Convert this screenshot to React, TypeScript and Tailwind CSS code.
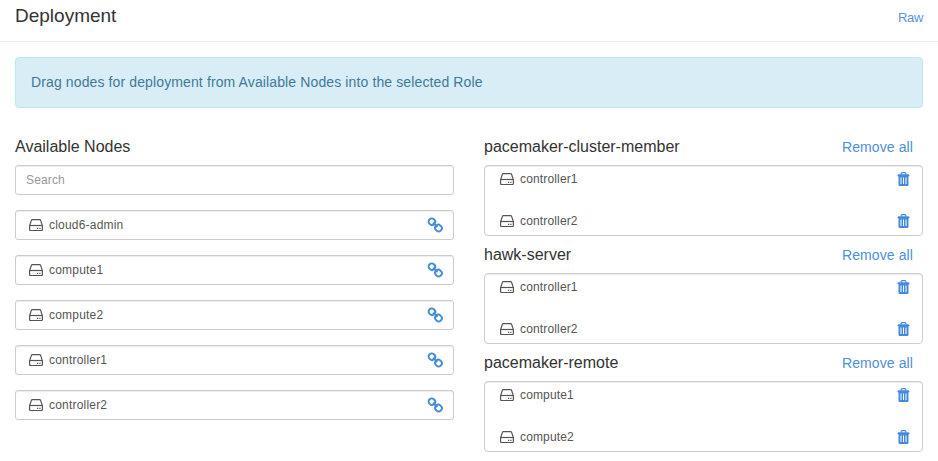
import React from "react";

const availableNodes = ["cloud6-admin", "compute1", "compute2", "controller1", "controller2"];

const roles = [
  { name: "pacemaker-cluster-member", nodes: ["controller1", "controller2"] },
  { name: "hawk-server", nodes: ["controller1", "controller2"] },
  { name: "pacemaker-remote", nodes: ["compute1", "compute2"] },
];

function DiskIcon() {
  return (
    <svg className="h-3 w-3.5 shrink-0" viewBox="0 0 14 12" fill="none" stroke="#555" strokeWidth="1.2">
      <path d="M.6 6.8 2.300 1.600Q2.600.6 3.500.6h7q.9 0 1.200 1l1.700 5.200v3.700q0 1-1 1H1.600Q.6 11.500.6 10.500Z" />
      <path d="M.8 6.500h12.400" />
      <path d="M8 9.400h1.200M10.300 9.400h1.200" strokeWidth="1.200" />
    </svg>
  );
}

function LinkIcon() {
  return (
    <svg className="h-4 w-4" viewBox="0 0 16 16" fill="none" stroke="#428bdc" strokeWidth="1.900">
      <rect x="1.600" y="1.600" width="6.600" height="6.200" rx="2.900" transform="rotate(45 4.900 4.700)" />
      <rect x="8.200" y="8" width="6.600" height="6.200" rx="2.900" transform="rotate(45 11.500 11.100)" />
      <path d="m6 5.800 4.400 4.200" />
    </svg>
  );
}

function TrashIcon() {
  return (
    <svg className="h-[14px] w-[13px]" viewBox="0 0 13 14">
      <path d="M4.100 2.500V1.800Q4.100.7 5.200.7h2.600q1.100 0 1.100 1.100v.7" fill="none" stroke="#428bdc" strokeWidth="1.200" />
      <path d="M.5 3.500q0-1.300 1.300-1.300h9.400q1.300 0 1.300 1.300v.8H.5Z" fill="#428bdc" />
      <path d="M1.500 4h10v8.700q0 1.300-1.300 1.300H2.800q-1.300 0-1.300-1.300Z" fill="#428bdc" />
      <path d="M4 5.500V12M6.500 5.500V12M9 5.500V12" stroke="#fff" strokeWidth="1" />
    </svg>
  );
}

export default function App() {
  return (
    <div className="h-[461px] w-[938px] overflow-hidden bg-white font-['Liberation_Sans',Arial,sans-serif] text-[#333]">
      <header className="flex h-[42px] items-start justify-between border-b border-[#eee] px-[15px]">
        <h1 className="mt-[6px] text-[19px] leading-5">Deployment</h1>
        <a className="mt-[9px] text-[13px] leading-[18px] tracking-[-0.3px] text-[#5a94e0]">Raw</a>
      </header>
      <div className="mx-[15px] mt-[15px] h-[51px] rounded border border-[#bce8f1] bg-[#d9edf7] px-[15px] pt-[14px] text-[14px] leading-5 tracking-[0.12px] text-[#3f7a98]">
        Drag nodes for deployment from Available Nodes into the selected Role
      </div>
      <main className="mx-[15px] mt-7 grid grid-cols-2 gap-[30px]">
        <section>
          <h2 className="h-[29px] pt-px text-[16px] leading-5">Available Nodes</h2>
          <input
            placeholder="Search"
            className="block h-[30px] w-full rounded-[3px] border border-[#ccc] px-2.5 text-[12px] tracking-[0.15px] text-[#555] shadow-[inset_0_1px_1px_rgba(0,0,0,0.075)] placeholder:text-[#999]"
          />
          <ul className="mt-[15px] flex flex-col gap-[15px]">
            {availableNodes.map((node) => (
              <li key={node} className="flex h-[30px] items-center rounded-[3px] border border-[#ccc] pr-[10px] pl-[13px] text-[12px] tracking-[0.2px] text-[#555] shadow-[inset_0_1px_1px_rgba(0,0,0,0.075)]">
                <DiskIcon />
                <span className="ml-1.5">{node}</span>
                <span className="ml-auto"><LinkIcon /></span>
              </li>
            ))}
          </ul>
        </section>
        <section>
          {roles.map((role) => (
            <div key={role.name} className="h-[108px]">
              <div className="flex h-[29px] justify-between pt-px pr-[9px] leading-5">
                <h2 className="text-[16px]">{role.name}</h2>
                <a className="mr-px text-[14px] tracking-[0.1px] text-[#4c8fde]">Remove all</a>
              </div>
              <ul className="h-[71px] rounded border border-[#ccc] pr-3 pl-[15px] text-[12px] tracking-[0.15px] text-[#555] shadow-[inset_0_1px_1px_rgba(0,0,0,0.075)]">
                {role.nodes.map((node) => (
                  <li key={node} className="flex h-[42px] items-start pt-1">
                    <span className="mt-[3px]"><DiskIcon /></span>
                    <span className="ml-1.5 leading-[18px]">{node}</span>
                    <span className="mt-[2px] ml-auto"><TrashIcon /></span>
                  </li>
                ))}
              </ul>
            </div>
          ))}
        </section>
      </main>
    </div>
  );
}
